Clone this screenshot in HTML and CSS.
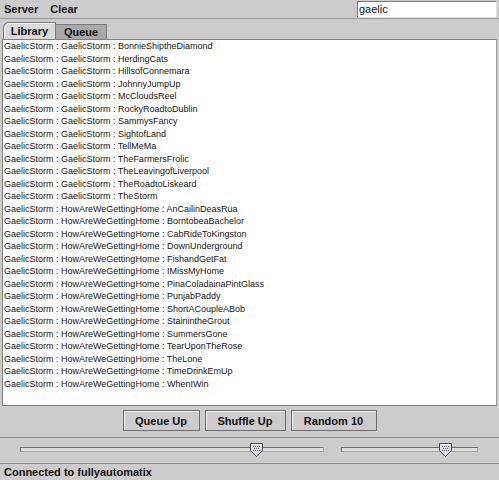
FILE: index.html
```html
<!DOCTYPE html>
<html>
<head>
<meta charset="utf-8">
<link rel="stylesheet" href="styles.css">
</head>
<body>
<div class="menubar">
  <span class="menu">Server</span>
  <span class="menu">Clear</span>
  <div class="search">gaelic</div>
</div>
<div class="tabs">
  <div class="tab sel">Library</div>
  <div class="tab unsel">Queue</div>
</div>
<div class="list">
  <div class="row">GaelicStorm : GaelicStorm : BonnieShiptheDiamond</div>
  <div class="row">GaelicStorm : GaelicStorm : HerdingCats</div>
  <div class="row">GaelicStorm : GaelicStorm : HillsofConnemara</div>
  <div class="row">GaelicStorm : GaelicStorm : JohnnyJumpUp</div>
  <div class="row">GaelicStorm : GaelicStorm : McCloudsReel</div>
  <div class="row">GaelicStorm : GaelicStorm : RockyRoadtoDublin</div>
  <div class="row">GaelicStorm : GaelicStorm : SammysFancy</div>
  <div class="row">GaelicStorm : GaelicStorm : SightofLand</div>
  <div class="row">GaelicStorm : GaelicStorm : TellMeMa</div>
  <div class="row">GaelicStorm : GaelicStorm : TheFarmersFrolic</div>
  <div class="row">GaelicStorm : GaelicStorm : TheLeavingofLiverpool</div>
  <div class="row">GaelicStorm : GaelicStorm : TheRoadtoLiskeard</div>
  <div class="row">GaelicStorm : GaelicStorm : TheStorm</div>
  <div class="row">GaelicStorm : HowAreWeGettingHome : AnCailinDeasRua</div>
  <div class="row">GaelicStorm : HowAreWeGettingHome : BorntobeaBachelor</div>
  <div class="row">GaelicStorm : HowAreWeGettingHome : CabRideToKingston</div>
  <div class="row">GaelicStorm : HowAreWeGettingHome : DownUnderground</div>
  <div class="row">GaelicStorm : HowAreWeGettingHome : FishandGetFat</div>
  <div class="row">GaelicStorm : HowAreWeGettingHome : IMissMyHome</div>
  <div class="row">GaelicStorm : HowAreWeGettingHome : PinaColadainaPintGlass</div>
  <div class="row">GaelicStorm : HowAreWeGettingHome : PunjabPaddy</div>
  <div class="row">GaelicStorm : HowAreWeGettingHome : ShortACoupleABob</div>
  <div class="row">GaelicStorm : HowAreWeGettingHome : StainintheGrout</div>
  <div class="row">GaelicStorm : HowAreWeGettingHome : SummersGone</div>
  <div class="row">GaelicStorm : HowAreWeGettingHome : TearUponTheRose</div>
  <div class="row">GaelicStorm : HowAreWeGettingHome : TheLone</div>
  <div class="row">GaelicStorm : HowAreWeGettingHome : TimeDrinkEmUp</div>
  <div class="row">GaelicStorm : HowAreWeGettingHome : WhenIWin</div>
</div>
<div class="buttons">
  <button class="btn b-queue">Queue Up</button>
  <button class="btn b-shuffle">Shuffle Up</button>
  <button class="btn b-random">Random 10</button>
</div>
<div class="sliders">
  <div class="track track-main">
    <svg class="thumb thumb-main" width="15" height="16" viewBox="0 0 15 16">
      <path d="M1.5 1.5 H13.5 V8.5 L7.5 14.5 L1.5 8.5 Z" fill="#dcdce4" stroke="#4a4a4a"/>
      <path d="M2.5 2.5 H12.5" stroke="#ffffff"/>
      <g fill="#6a6a7a">
        <rect x="4" y="4" width="1" height="1"/><rect x="6" y="4" width="1" height="1"/><rect x="8" y="4" width="1" height="1"/><rect x="10" y="4" width="1" height="1"/>
        <rect x="5" y="6" width="1" height="1"/><rect x="7" y="6" width="1" height="1"/><rect x="9" y="6" width="1" height="1"/>
        <rect x="4" y="8" width="1" height="1"/><rect x="6" y="8" width="1" height="1"/><rect x="8" y="8" width="1" height="1"/><rect x="10" y="8" width="1" height="1"/>
      </g>
    </svg>
  </div>
  <div class="track track-vol">
    <svg class="thumb thumb-vol" width="15" height="16" viewBox="0 0 15 16">
      <path d="M1.5 1.5 H13.5 V8.5 L7.5 14.5 L1.5 8.5 Z" fill="#dcdce4" stroke="#4a4a4a"/>
      <path d="M2.5 2.5 H12.5" stroke="#ffffff"/>
      <g fill="#6a6a7a">
        <rect x="4" y="4" width="1" height="1"/><rect x="6" y="4" width="1" height="1"/><rect x="8" y="4" width="1" height="1"/><rect x="10" y="4" width="1" height="1"/>
        <rect x="5" y="6" width="1" height="1"/><rect x="7" y="6" width="1" height="1"/><rect x="9" y="6" width="1" height="1"/>
        <rect x="4" y="8" width="1" height="1"/><rect x="6" y="8" width="1" height="1"/><rect x="8" y="8" width="1" height="1"/><rect x="10" y="8" width="1" height="1"/>
      </g>
    </svg>
  </div>
</div>
<div class="status">Connected to fullyautomatix</div>
</body>
</html>
```
FILE: styles.css
```css
* { box-sizing: border-box; }
html, body { margin: 0; padding: 0; }
body {
  width: 499px;
  height: 480px;
  overflow: hidden;
  background: #cccccc;
  font-family: "Liberation Sans", Arial, sans-serif;
  color: #111;
  display: flex;
  flex-direction: column;
}
.menubar {
  height: 19px;
  flex: none;
  border-bottom: 1px solid #9a9a9a;
  display: flex;
  align-items: flex-start;
  padding-left: 4px;
}
.menu {
  font-weight: bold;
  font-size: 11px;
  line-height: 18px;
  margin-right: 12px;
  color: #1a1a1a;
}
.search {
  margin-left: auto;
  margin-right: 2px;
  margin-top: 1px;
  width: 140px;
  height: 17px;
  background: #fff;
  border: 1px solid;
  border-color: #7c7c7c #e2e2e2 #e2e2e2 #7c7c7c;
  font-size: 11px;
  line-height: 15px;
  padding-left: 1px;
}
.tabs {
  height: 20px;
  flex: none;
  display: flex;
  align-items: flex-end;
  padding-left: 3px;
}
.tab {
  font-weight: bold;
  font-size: 11px;
  border: 1px solid #7a7a7a;
  border-bottom: none;
  display: flex;
  align-items: center;
  justify-content: center;
}
.tab.sel {
  width: 53px;
  height: 17px;
  background: #d9d9d9;
  border-top-left-radius: 6px;
  box-shadow: inset 1px 1px 0 #f2f2f2;
}
.tab.unsel {
  width: 51px;
  height: 15px;
  background: #a9a9a9;
  border-left: none;
}
.list {
  flex: none;
  height: 367px;
  margin: 0 2px;
  background: #fff;
  border: 1px solid #808080;
  border-right-color: #9a9a9a;
  font-size: 9px;
  padding-left: 1px;
}
.row {
  height: 12.5px;
  line-height: 13px;
  white-space: nowrap;
  color: #151515;
}
.buttons {
  flex: none;
  height: 32px;
  border-bottom: 1px solid #909090;
  display: flex;
  justify-content: center;
  align-items: flex-start;
  padding-top: 4px;
  gap: 5px;
}
.btn {
  height: 21px;
  padding: 0;
  margin: 0;
  border: 1px solid #6c6c6c;
  background: #cccccc;
  box-shadow: inset 1px 1px 0 #f4f4f4;
  font-family: "Liberation Sans", Arial, sans-serif;
  font-weight: bold;
  font-size: 11px;
  color: #111;
}
.b-queue { width: 77px; }
.b-shuffle { width: 81px; }
.b-random { width: 86px; }
.sliders {
  flex: none;
  height: 26px;
  border-bottom: 1px solid #8c8c8c;
  display: flex;
  align-items: flex-start;
  padding-top: 9px;
  padding-left: 20px;
}
.track {
  position: relative;
  height: 5px;
  background: #dedede;
  border: 1px solid #6e6e6e;
  border-right-color: #a8a8a8;
  border-bottom-color: #a8a8a8;
}
.track-main { width: 304px; margin-right: 17px; }
.track-vol { width: 137px; }
.thumb { position: absolute; top: -6px; }
.thumb-main { left: 228px; }
.thumb-vol { left: 96px; }
.status {
  flex: 1;
  font-weight: bold;
  font-size: 11px;
  padding-left: 4px;
  display: flex;
  align-items: center;
  color: #111;
}
```
